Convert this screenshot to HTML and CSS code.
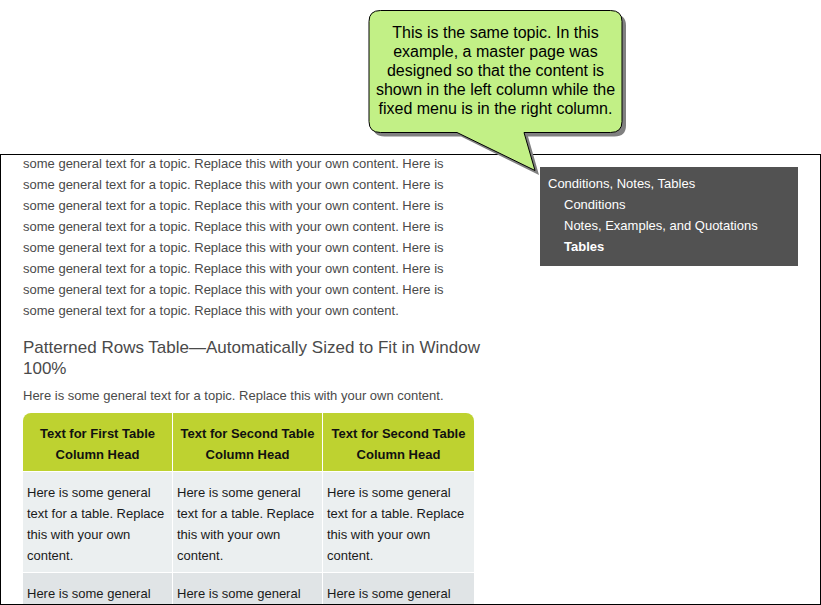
FILE: index.html
```html
<!DOCTYPE html>
<html lang="en">
<head>
<meta charset="utf-8">
<title>Tables</title>
<link rel="stylesheet" href="styles.css">
</head>
<body>
<div class="window">
  <main class="topic">
    <p class="text">some general text for a topic. Replace this with your own content. Here is some general text for a topic. Replace this with your own content. Here is some general text for a topic. Replace this with your own content. Here is some general text for a topic. Replace this with your own content. Here is some general text for a topic. Replace this with your own content. Here is some general text for a topic. Replace this with your own content. Here is some general text for a topic. Replace this with your own content. Here is some general text for a topic. Replace this with your own content.</p>
    <h2 class="heading">Patterned Rows Table—Automatically Sized to Fit in Window 100%</h2>
    <p class="text">Here is some general text for a topic. Replace this with your own content.</p>
    <table class="rows">
      <thead>
        <tr><th>Text for First Table Column Head</th><th>Text for Second Table Column Head</th><th>Text for Second Table Column Head</th></tr>
      </thead>
      <tbody>
        <tr><td>Here is some general text for a table. Replace this with your own content.</td><td>Here is some general text for a table. Replace this with your own content.</td><td>Here is some general text for a table. Replace this with your own content.</td></tr>
        <tr><td>Here is some general</td><td>Here is some general</td><td>Here is some general</td></tr>
      </tbody>
    </table>
  </main>
  <nav class="menu">
    <a href="#">Conditions, Notes, Tables</a>
    <ul>
      <li><a href="#">Conditions</a></li>
      <li><a href="#">Notes, Examples, and Quotations</a></li>
      <li><a href="#" class="current">Tables</a></li>
    </ul>
  </nav>
</div>
<aside class="callout">
  <svg class="bubble" width="260" height="170" viewBox="0 0 260 170" aria-hidden="true">
    <path class="shadow" transform="translate(4 4)" d="M12.500 1.500H242.500Q254 1.500 254 12.500V112.500Q254 123.500 242.500 123.500H156L167 162L89 123.500H12.500Q1 123.500 1 112.500V12.500Q1 1.500 12.500 1.500Z"/>
    <path class="fill" d="M12.500 1.500H242.500Q254 1.500 254 12.500V112.500Q254 123.500 242.500 123.500H156L167 161.500L89 123.500H12.500Q1 123.500 1 112.500V12.500Q1 1.500 12.500 1.500Z"/>
  </svg>
  <p class="caption">This is the same topic. In this example, a master page was designed so that the content is shown in the left column while the fixed menu is in the right column.</p>
</aside>
</body>
</html>
```
FILE: styles.css
```css
* {
  box-sizing: border-box;
}

body {
  display: flex;
  flex-direction: column;
  height: 100vh;
  margin: 0;
  padding-top: 154px;
  overflow: hidden;
  background: #fff;
  color: #4a4a4a;
  font: 13px/21px "Liberation Sans", Arial, sans-serif;
}

.window {
  display: grid;
  flex: 1;
  grid-template-columns: 451fr 258fr;
  column-gap: 66px;
  align-items: start;
  min-height: 0;
  padding: 0 22px;
  overflow: hidden;
  border: 1px solid #000;
}

.topic {
  margin-top: -2px;
}

.text {
  margin: 0;
}

.heading {
  margin: 16px -8px 6px 0;
  font-size: 17px;
  font-weight: normal;
  line-height: 21px;
}

.rows {
  width: 100%;
  margin-top: 7px;
  border-collapse: separate;
  border-spacing: 0;
  table-layout: fixed;
  color: #1a1a1a;
}

.rows th,
.rows td {
  padding: 10px 4px 6px;
  border-right: 1px solid #fff;
  border-bottom: 1px solid #fff;
  text-align: left;
  vertical-align: top;
}

.rows th {
  width: 150px;
  background: #bed230;
  color: #111;
  text-align: center;
}

.rows th:last-child,
.rows td:last-child {
  width: auto;
  border-right: 0;
}

.rows th:first-child {
  border-top-left-radius: 8px;
}

.rows th:last-child {
  border-top-right-radius: 8px;
}

.rows td {
  background: #ebeff0;
}

.rows tr:nth-child(2) td {
  background: #e0e4e6;
}

.menu {
  margin-top: 12px;
  padding: 6px 8px 9px;
  background: #525252;
}

.menu ul {
  margin: 0;
  padding: 0 0 0 16px;
  list-style: none;
}

.menu a {
  color: #fff;
  text-decoration: none;
}

.menu .current {
  font-weight: bold;
}

.callout {
  position: absolute;
  top: 9px;
  left: 368px;
  width: 255px;
}

.bubble {
  position: absolute;
  top: 0;
  left: 0;
}

.fill {
  fill: #c2f086;
  stroke: #000;
}

.shadow {
  fill: #808080;
}

.caption {
  position: relative;
  margin: 0;
  padding: 14px 4px;
  color: #000;
  font-size: 16px;
  line-height: 19px;
  text-align: center;
}
```
